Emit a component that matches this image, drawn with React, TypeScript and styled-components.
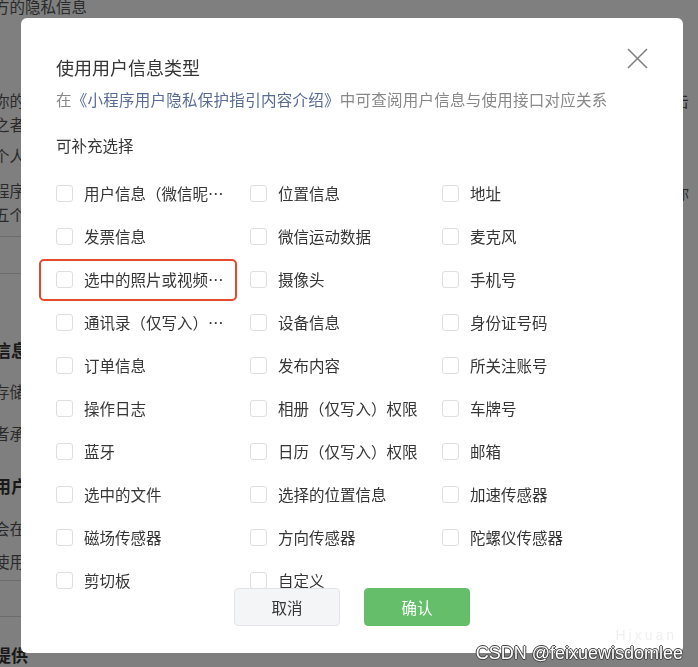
import React from "react";
import styled, { createGlobalStyle } from "styled-components";

const GlobalStyle = createGlobalStyle`
  html, body {
    margin: 0;
    padding: 0;
    background: #ffffff;
    font-family: "Noto Sans CJK SC", "Noto Sans", sans-serif;
  }
  * { box-sizing: border-box; }
`;

const Page = styled.div`
  width: 698px;
  height: 667px;
  overflow: hidden;
  display: flex;
  justify-content: space-between;
  color: #555;
`;

const BgColumn = styled.div<{ $left?: boolean }>`
  display: flex;
  flex-direction: column;
  width: ${(p) => (p.$left ? "120px" : "40px")};
  margin-left: ${(p) => (p.$left ? "-6px" : "0")};
`;

const BgText = styled.div<{ $mt: number; $bold?: boolean }>`
  margin-top: ${(p) => p.$mt}px;
  font-size: ${(p) => (p.$bold ? "17px" : "15.5px")};
  font-weight: ${(p) => (p.$bold ? 600 : 400)};
  color: ${(p) => (p.$bold ? "#333" : "#555")};
  line-height: 24px;
  white-space: nowrap;
`;

const BgRule = styled.div<{ $mt: number }>`
  margin-top: ${(p) => p.$mt}px;
  height: 1px;
  width: 100%;
  background: #d8d8d8;
`;

const Overlay = styled.div`
  position: fixed;
  inset: 0;
  background: rgba(0, 0, 0, 0.5);
  display: flex;
  align-items: flex-start;
  padding: 18px 0 0 21px;
`;

const Modal = styled.div`
  position: relative;
  width: 662px;
  height: 635px;
  background: #ffffff;
  border-radius: 6px;
  padding: 37px 0 0 35px;
  overflow: hidden;
`;

const Title = styled.h2`
  margin: 0;
  font-size: 18px;
  line-height: 24px;
  font-weight: 400;
  color: #353535;
`;

const Desc = styled.p`
  margin: 9px 0 0;
  font-size: 15.5px;
  line-height: 22px;
  letter-spacing: 0.26px;
  color: #888888;
`;

const Link = styled.a`
  color: #576b95;
  text-decoration: none;
`;

const Section = styled.div`
  margin-top: 24px;
  font-size: 15.5px;
  line-height: 22px;
  color: #353535;
`;

const Grid = styled.div`
  margin-top: 15.5px;
  display: grid;
  grid-template-columns: 194px 192px 192px;
  grid-auto-rows: 43px;
`;

const Item = styled.label<{ $highlight?: boolean }>`
  position: relative;
  display: flex;
  align-items: center;
  gap: 11px;

  ${(p) =>
    p.$highlight &&
    `
    &::before {
      content: "";
      position: absolute;
      left: -17px;
      top: 1.5px;
      width: 194px;
      height: 38px;
      border: 2px solid #e5482d;
      border-radius: 5px;
    }
  `}
`;

const Box = styled.span`
  width: 17px;
  height: 17px;
  flex-shrink: 0;
  border: 1px solid #dedede;
  border-radius: 3px;
  background: #fff;
`;

const Label = styled.span`
  max-width: 145px;
  font-size: 15.5px;
  line-height: 22px;
  color: #353535;
  white-space: nowrap;
  overflow: hidden;
  text-overflow: ellipsis;
`;

const Footer = styled.div`
  position: absolute;
  left: 0;
  right: 0;
  bottom: 27px;
  display: flex;
  justify-content: center;
  gap: 24px;
`;

const Button = styled.button<{ $primary?: boolean }>`
  width: 106px;
  height: 38px;
  border-radius: 4px;
  font-family: inherit;
  font-size: 15.5px;
  border: 1px solid ${(p) => (p.$primary ? "#65bf6a" : "#e2e4e8")};
  background: ${(p) => (p.$primary ? "#65bf6a" : "#f4f5f7")};
  color: ${(p) => (p.$primary ? "#ffffff" : "#353535")};
`;

const Close = styled.button`
  position: absolute;
  top: 29px;
  right: 34px;
  width: 23px;
  height: 23px;
  padding: 0;
  border: 0;
  background: none;
`;

const Watermark = styled.div`
  position: fixed;
  right: 15px;
  bottom: 4px;
  display: flex;
  flex-direction: column;
  align-items: flex-end;
  font-family: "Liberation Sans", Arial, sans-serif;
`;

const Faint = styled.span`
  font-size: 14px;
  letter-spacing: 3px;
  color: #f0f0f0;
  margin-right: 6px;
`;

const Mark = styled.span`
  font-size: 18px;
  line-height: 20px;
  color: #ffffff;
  text-shadow: -1px 0 #444, 1px 0 #444, 0 -1px #444, 0 1px #444;
`;

const options = [
  "用户信息（微信昵称、头像）",
  "位置信息",
  "地址",
  "发票信息",
  "微信运动数据",
  "麦克风",
  "选中的照片或视频信息",
  "摄像头",
  "手机号",
  "通讯录（仅写入）权限",
  "设备信息",
  "身份证号码",
  "订单信息",
  "发布内容",
  "所关注账号",
  "操作日志",
  "相册（仅写入）权限",
  "车牌号",
  "蓝牙",
  "日历（仅写入）权限",
  "邮箱",
  "选中的文件",
  "选择的位置信息",
  "加速传感器",
  "磁场传感器",
  "方向传感器",
  "陀螺仪传感器",
  "剪切板",
  "自定义",
];

export default function App() {
  return (
    <>
      <GlobalStyle />
      <Page>
        <BgColumn $left>
          <BgText $mt={-6}>方的隐私信息</BgText>
          <BgText $mt={70}>你的</BgText>
          <BgText $mt={0}>之者</BgText>
          <BgText $mt={7}>个人</BgText>
          <BgText $mt={11}>程序</BgText>
          <BgText $mt={0}>五个</BgText>
          <BgRule $mt={10} />
          <BgRule $mt={37} />
          <BgText $mt={64} $bold>信息</BgText>
          <BgText $mt={17}>存储</BgText>
          <BgText $mt={18}>者承</BgText>
          <BgText $mt={29} $bold>用户</BgText>
          <BgText $mt={18}>会在</BgText>
          <BgText $mt={9}>使用</BgText>
          <BgRule $mt={7} />
          <BgRule $mt={36} />
          <BgText $mt={27} $bold>提供</BgText>
        </BgColumn>
        <BgColumn>
          <BgText $mt={88}>点击</BgText>
          <BgText $mt={68}>理你</BgText>
          <BgText $mt={218}>间</BgText>
        </BgColumn>
      </Page>
      <Overlay>
        <Modal>
          <Close aria-label="关闭">
            <svg width="23" height="23" viewBox="0 0 23 23">
              <path
                d="M2 2 L21 21 M21 2 L2 21"
                stroke="#808080"
                strokeWidth="1.6"
                fill="none"
              />
            </svg>
          </Close>
          <Title>使用用户信息类型</Title>
          <Desc>
            在<Link>《小程序用户隐私保护指引内容介绍》</Link>
            中可查阅用户信息与使用接口对应关系
          </Desc>
          <Section>可补充选择</Section>
          <Grid>
            {options.map((o, i) => (
              <Item key={o} $highlight={i === 6}>
                <Box />
                <Label>{o}</Label>
              </Item>
            ))}
          </Grid>
          <Footer>
            <Button>取消</Button>
            <Button $primary>确认</Button>
          </Footer>
        </Modal>
      </Overlay>
      <Watermark>
        <Faint>Hixuan</Faint>
        <Mark>CSDN @feixuewisdomlee</Mark>
      </Watermark>
    </>
  );
}
